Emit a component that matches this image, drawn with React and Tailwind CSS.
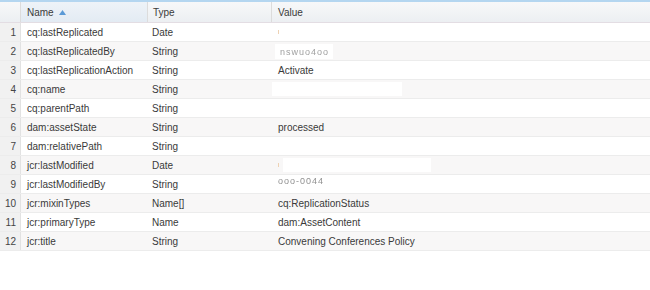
import React from 'react';

const rows = [
  { name: 'cq:lastReplicated', type: 'Date', value: '', mask: 'dot' },
  { name: 'cq:lastReplicatedBy', type: 'String', value: '', mask: 'scribble' },
  { name: 'cq:lastReplicationAction', type: 'String', value: 'Activate' },
  { name: 'cq:name', type: 'String', value: '', mask: 'box' },
  { name: 'cq:parentPath', type: 'String', value: '' },
  { name: 'dam:assetState', type: 'String', value: 'processed' },
  { name: 'dam:relativePath', type: 'String', value: '' },
  { name: 'jcr:lastModified', type: 'Date', value: '', mask: 'dot' },
  { name: 'jcr:lastModifiedBy', type: 'String', value: '', mask: 'scribble2' },
  { name: 'jcr:mixinTypes', type: 'Name[]', value: 'cq:ReplicationStatus' },
  { name: 'jcr:primaryType', type: 'Name', value: 'dam:AssetContent' },
  { name: 'jcr:title', type: 'String', value: 'Convening Conferences Policy' },
];

// redacted cells in the screenshot: white patches with faint marks
const Mask = ({ kind }) => {
  if (kind === 'dot') {
    return (
      <div className="flex items-center h-full">
        <span className="w-px h-[4px] bg-[#eed2b4]" />
        <span className="ml-1 w-[148px] h-[14px] bg-white" />
      </div>
    );
  }
  if (kind === 'box') {
    return <div className="-ml-[6px] w-[130px] h-[14px] bg-white" />;
  }
  if (kind === 'scribble') {
    return (
      <div className="-ml-[3px] w-[58px] h-[15px] bg-white flex items-end pb-[2px] pl-[5px]">
        <span className="text-[#a0a0a0] text-[9px] leading-none tracking-[1px] blur-[0.7px]">nswuo4oo</span>
      </div>
    );
  }
  return (
    <div className="h-[15px] flex items-start">
      <span className="text-[#909090] text-[9px] leading-none tracking-[1px] blur-[0.7px]">ooo-0044</span>
    </div>
  );
};

export default function App() {
  return (
    <div className="w-[650px] h-[290px] bg-white text-[10px] text-[#3a3a3a] font-['Liberation_Sans',Arial,sans-serif] overflow-hidden">
      <div className="h-[2px] bg-[#b4d6f0]" />
      <div className="flex h-[21px] bg-gradient-to-b from-[#f7f8f9] to-[#eceff2] border-b border-[#e3dde3]">
        <div className="w-[21px] border-r border-[#dcdcdc]" />
        <div className="w-[127px] flex items-center pl-[6px] border-r border-[#dcdcdc] bg-gradient-to-b from-[#eef3f8] to-[#e3ebf3]">
          Name
          <svg width="7" height="5" viewBox="0 0 7 5" className="ml-[5px]">
            <path d="M0 5 L3.5 0 L7 5 Z" fill="#5b9ad6" />
          </svg>
        </div>
        <div className="w-[124px] flex items-center pl-[5px] border-r border-[#dcdcdc]">Type</div>
        <div className="flex-1 flex items-center pl-[6px]">Value</div>
      </div>
      {rows.map((r, i) => (
        <div
          key={r.name}
          className={`flex h-[19px] border-b border-[#ececec] ${i % 2 === 1 ? 'bg-[#f8f7f7]' : 'bg-white'}`}
        >
          <div className="w-[21px] bg-[#f1f1f1] border-r border-[#e2e2e2] flex items-center justify-end pr-[4px] text-[#444]">
            {i + 1}
          </div>
          <div className="w-[127px] flex items-center pl-[6px]">{r.name}</div>
          <div className="w-[124px] flex items-center pl-[4px]">{r.type}</div>
          <div className="flex-1 flex items-center pl-[6px]">
            {r.mask ? <Mask kind={r.mask} /> : r.value}
          </div>
        </div>
      ))}
    </div>
  );
}
